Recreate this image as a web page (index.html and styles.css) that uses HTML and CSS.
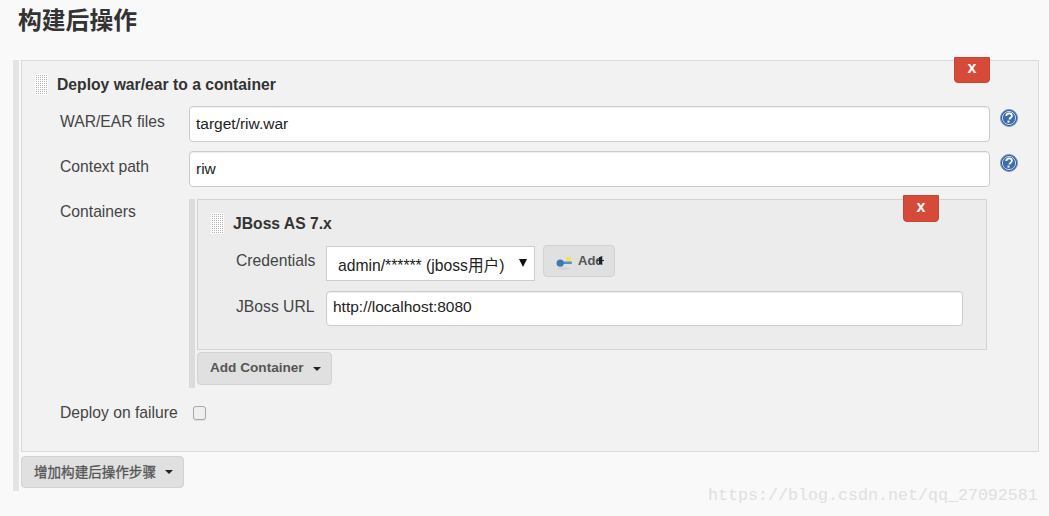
FILE: index.html
```html
<!DOCTYPE html>
<html lang="zh">
<head>
<meta charset="UTF-8">
<meta name="viewport" content="width=device-width, initial-scale=1.0">
<title>构建后操作</title>
<link rel="stylesheet" href="styles.css">
</head>
<body>
<h1 class="section-title">构建后操作</h1>

<div class="step-list">
 <!-- Deploy step -->
 <div class="panel">
  <button class="delete-btn delete-top" type="button">x</button>
  <div class="panel-head">
   <span class="handle"></span>
   <b class="panel-title">Deploy war/ear to a container</b>
  </div>
  <div class="rows">
   <div class="row">
    <label class="row-label">WAR/EAR files</label>
    <input class="text-input" type="text" value="target/riw.war">
    <svg class="help" viewBox="0 0 18 18" width="18" height="18"><circle cx="9" cy="9" r="8.5" fill="#2f5d9b" stroke="#7f9cc4"/><circle cx="9" cy="9" r="6.6" fill="#3c6cab" stroke="#c9d7e9" stroke-width="1"/><path d="M6.3 7.1c0-1.7 1.2-2.7 2.8-2.7s2.8 1 2.8 2.4c0 1.1-.6 1.6-1.4 2.1-.7.4-1 .8-1 1.7" fill="none" stroke="#fff" stroke-width="1.8"/><rect x="7.5" y="11.6" width="2" height="2" fill="#fff"/></svg>
   </div>
   <div class="row">
    <label class="row-label">Context path</label>
    <input class="text-input" type="text" value="riw">
    <svg class="help" viewBox="0 0 18 18" width="18" height="18"><circle cx="9" cy="9" r="8.5" fill="#2f5d9b" stroke="#7f9cc4"/><circle cx="9" cy="9" r="6.6" fill="#3c6cab" stroke="#c9d7e9" stroke-width="1"/><path d="M6.3 7.1c0-1.7 1.2-2.7 2.8-2.7s2.8 1 2.8 2.4c0 1.1-.6 1.6-1.4 2.1-.7.4-1 .8-1 1.7" fill="none" stroke="#fff" stroke-width="1.8"/><rect x="7.5" y="11.6" width="2" height="2" fill="#fff"/></svg>
   </div>
   <div class="row row-containers">
    <label class="row-label">Containers</label>
    <div class="containers">
     <div class="panel panel-nested">
      <button class="delete-btn delete-nested" type="button">x</button>
      <div class="panel-head">
       <span class="handle"></span>
       <b class="panel-title">JBoss AS 7.x</b>
      </div>
      <div class="nested-row nested-credentials">
       <label class="row-label">Credentials</label>
       <div class="select-wrap">
        <select class="select-input"><option>admin/****** (jboss用户)</option></select>
       </div>
       <button class="add-btn" type="button">
        <svg class="key" viewBox="0 0 17 14" width="17" height="14"><ellipse cx="8" cy="12.5" rx="7" ry="1.2" fill="#d2d2d2"/><circle cx="12.5" cy="3.2" r="2.6" fill="#f2e25a"/><rect x="5" y="5.4" width="11" height="2.6" rx="1" fill="#5c8fc4"/><circle cx="4.2" cy="7.2" r="3.6" fill="#3f78b5"/></svg>
        <span class="add-text">Add</span>
       </button>
      </div>
      <div class="nested-row nested-url">
       <label class="row-label">JBoss URL</label>
       <input class="text-input url-input" type="text" value="http://localhost:8080">
      </div>
     </div>
     <button class="menu-btn add-container" type="button">Add Container<span class="caret"></span></button>
    </div>
   </div>
   <div class="row row-check">
    <label class="row-label">Deploy on failure</label>
    <input class="check" type="checkbox">
   </div>
  </div>
 </div>
 <button class="menu-btn add-step" type="button">增加构建后操作步骤<span class="caret"></span></button>
</div>

<div class="watermark">https://blog.csdn.net/qq_27092581</div>
</body>
</html>
```

FILE: styles.css
```css
* {
 box-sizing: border-box;
}
body {
 margin: 0;
 background-color: #f9f9f9;
 color: #333;
 font-family: "Liberation Sans", "Noto Sans CJK SC", Arial, sans-serif;
 font-size: 15.7px;
 overflow: hidden;
}
.section-title {
 margin: 0;
 height: 60px;
 padding: 6px 0 0 18px;
 font-size: 23.8px;
 line-height: 30px;
 font-weight: 700;
}
.step-list {
 width: 1026px;
 margin-left: 13px;
 padding: 0 0 3px 2px;
 border-left: 6px solid #e4e4e4;
}
.panel {
 position: relative;
 height: 392px;
 padding: 13px 0 0 13px;
 background-color: #f2f2f2;
 border: 1px solid #d9d9d9;
}
.panel-head {
 display: flex;
 align-items: center;
 gap: 9px;
 height: 21px;
}
.panel-title {
 font-size: 15.7px;
}
.handle {
 flex: none;
 width: 13px;
 height: 21px;
 background-color: #b4b4b4;
 background-image: linear-gradient(90deg, #fff 1px, transparent 1px), linear-gradient(#fff 1px, transparent 1px);
 background-size: 2px 2px;
}
.rows {
 margin-top: 11px;
 padding-left: 25px;
}
.row {
 display: grid;
 grid-template-columns: 119px 801px 18px;
 column-gap: 10px;
 margin-bottom: 9px;
}
.row-label {
 color: #444;
 padding-top: 6px;
 line-height: 20px;
 white-space: nowrap;
}
.text-input {
 height: 36px;
 padding: 0 6px;
 background-color: #fff;
 border: 1px solid #ccc;
 border-radius: 4px;
 box-shadow: inset 0 1px 1px #eee;
 color: #222;
 font-family: inherit;
 font-size: 15.5px;
}
.help {
 margin-top: 3px;
}
.row-containers {
 margin-top: 12px;
 margin-bottom: 0;
}
.row-containers > .row-label {
 padding-top: 3px;
}
.containers {
 height: 189px;
 padding-left: 2px;
 border-left: 6px solid #dcdcdc;
}
.panel-nested {
 width: 790px;
 height: 151px;
 padding-top: 13px;
 background-color: #ececec;
 border-color: #d4d4d4;
}
.nested-row {
 display: flex;
 align-items: flex-start;
 margin-top: 10px;
 padding-left: 25px;
}
.nested-credentials {
 margin-top: 12px;
}
.nested-row .row-label {
 flex: none;
 width: 90px;
 padding-top: 5px;
}
.nested-url .row-label {
 padding-top: 6px;
}
.select-wrap {
 position: relative;
 width: 209px;
}
.select-wrap::after {
 content: "";
 position: absolute;
 top: 13px;
 right: 8px;
 border-top: 8px solid #111;
 border-left: 4px solid transparent;
 border-right: 4px solid transparent;
}
.select-input {
 display: block;
 width: 100%;
 height: 35px;
 padding: 4px 0 0 11px;
 background-color: #fff;
 border: 1px solid #ccc;
 border-radius: 0;
 appearance: none;
 color: #222;
 font-family: inherit;
 font-size: 15.7px;
}
.add-btn {
 display: flex;
 align-items: center;
 gap: 5px;
 width: 72px;
 height: 32px;
 margin: -1px 0 0 8px;
 padding: 0 0 0 12px;
 background-color: #e0e0e0;
 border: 1px solid #d2d2d2;
 border-radius: 4px;
 color: #555;
 font-family: inherit;
 font-size: 13px;
 font-weight: 700;
}
.key {
 flex: none;
 margin-top: 3px;
}
.add-text {
 position: relative;
 margin-top: -1px;
}
/* the little plus sitting on the last letter */
.add-text::after {
 content: "";
 position: absolute;
 right: -1px;
 top: 4px;
 width: 7px;
 height: 7px;
 background-image: linear-gradient(#222, #222), linear-gradient(#222, #222);
 background-size: 7px 1px, 3px 7px;
 background-position: 0 3px, 2px 0;
 background-repeat: no-repeat;
}
.url-input {
 width: 637px;
 height: 35px;
 padding-bottom: 3px;
}
.delete-btn {
 position: absolute;
 z-index: 1;
 width: 36px;
 padding: 0 0 4px;
 background-color: #d54a38;
 border: 1px solid #c84433;
 border-radius: 0 0 4px 4px;
 color: #fff;
 font-family: inherit;
 font-size: 16px;
 font-weight: 700;
}
.delete-top {
 top: -4px;
 left: 932px;
 height: 26px;
}
.delete-nested {
 top: -5px;
 left: 705px;
 height: 27px;
}
.menu-btn {
 display: inline-flex;
 align-items: center;
 padding: 0;
 background-color: #e0e0e0;
 border: 1px solid #d2d2d2;
 border-radius: 4px;
 color: #555;
 font-family: inherit;
 font-size: 13.6px;
 font-weight: 700;
}
.caret {
 margin: 3px 0 0 9px;
 border-top: 4px solid #222;
 border-left: 4px solid transparent;
 border-right: 4px solid transparent;
}
.add-container {
 width: 135px;
 height: 33px;
 margin-top: 2px;
 padding: 0 0 3px 12px;
}
.add-step {
 width: 163px;
 height: 32px;
 margin-top: 4px;
 padding: 0 0 3px 12px;
 font-size: 13.55px;
 font-weight: 400;
 -webkit-text-stroke: 0.3px #555;
}
.row-check {
 margin-top: 12px;
 margin-bottom: 0;
}
.row-check > .row-label {
 padding-top: 3px;
}
.check {
 width: 13px;
 height: 14px;
 margin: 6px 0 0 4px;
 appearance: none;
 background-color: #efefef;
 border: 1px solid #a8a8a8;
 border-radius: 3px;
 box-shadow: 0 1px 1px #ddd;
}
.watermark {
 position: absolute;
 top: 485px;
 left: 708px;
 color: #e0e0dc;
 font-family: "Liberation Mono", monospace;
 font-size: 16.67px;
 line-height: 22px;
 white-space: nowrap;
}
```
